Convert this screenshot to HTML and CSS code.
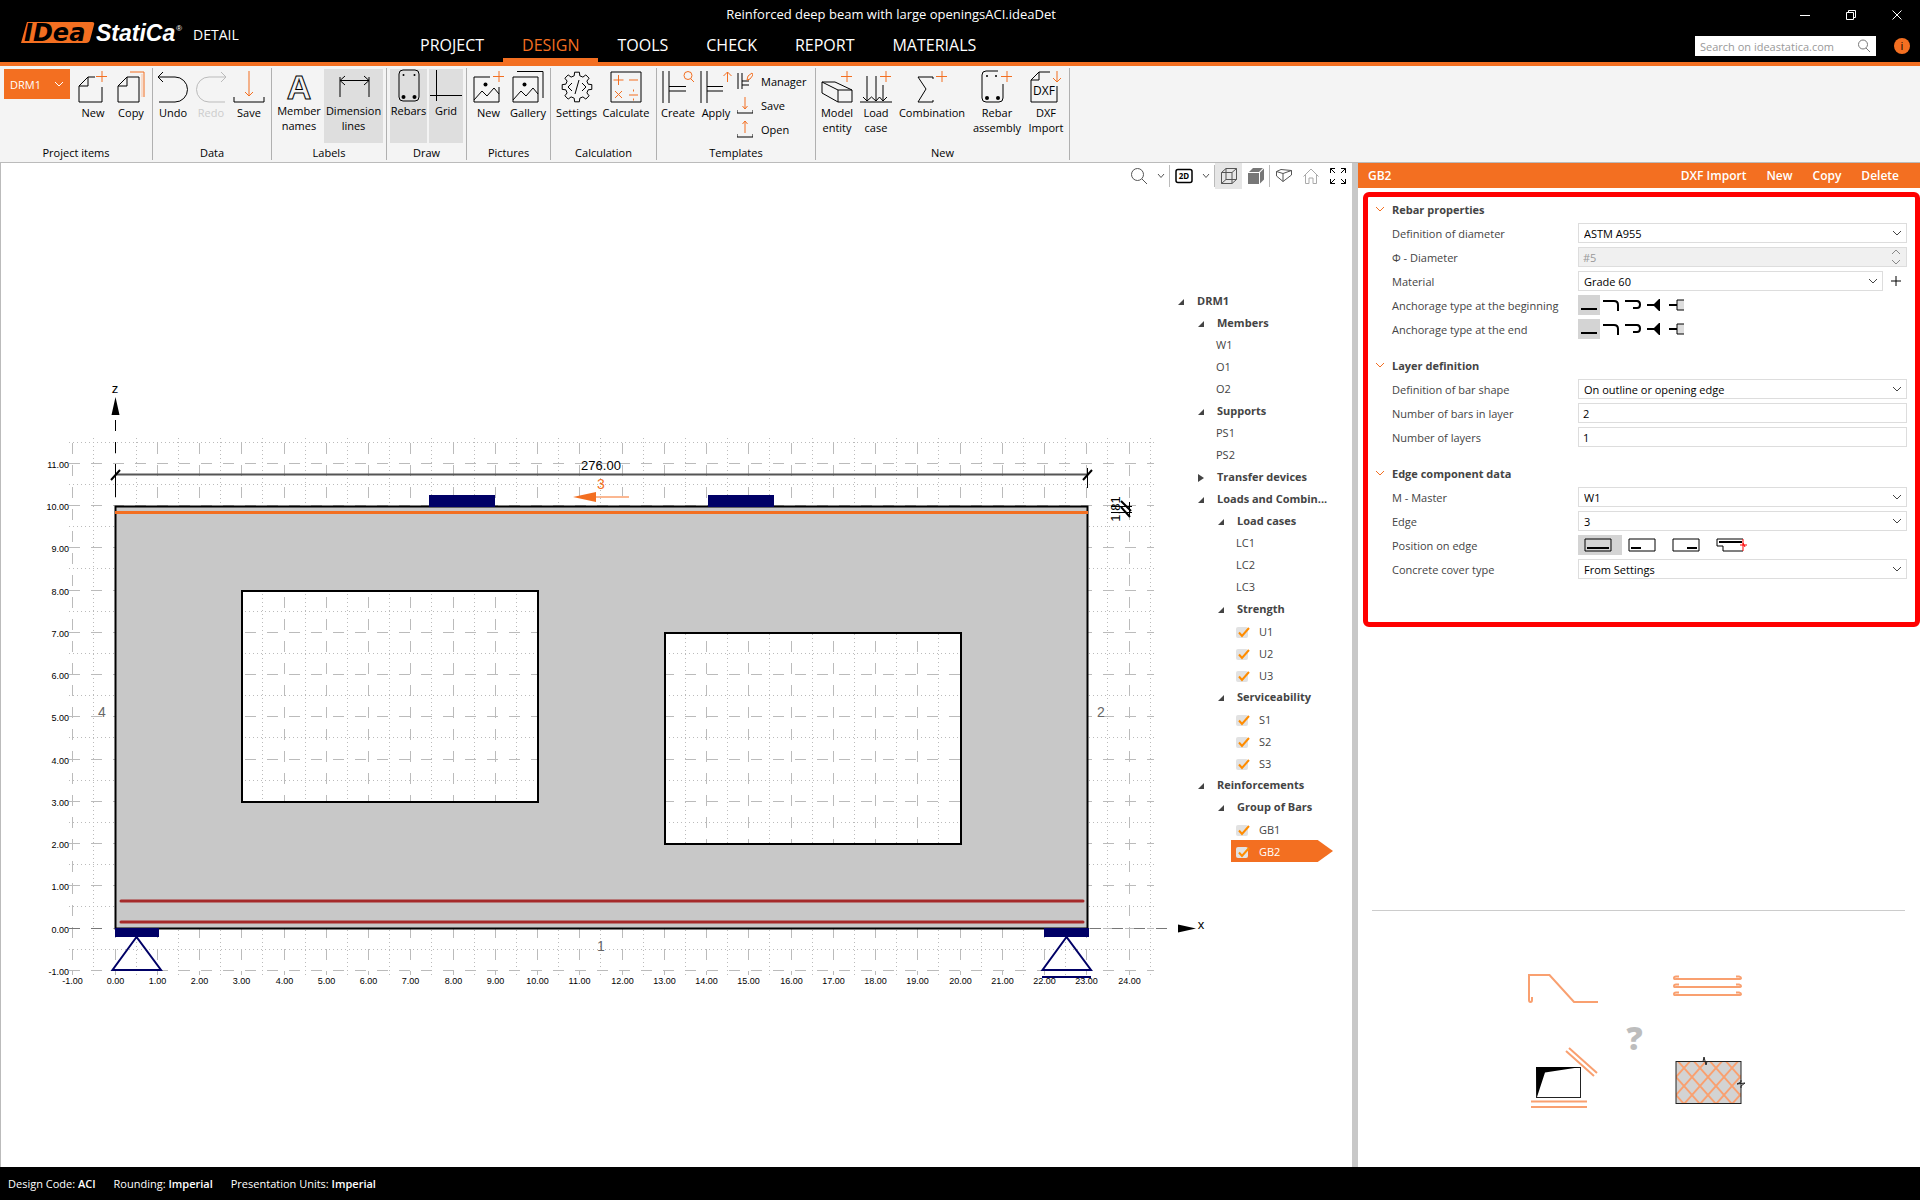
FILE: index.html
```html
<!DOCTYPE html>
<html lang="en">
<head>
    <meta charset="UTF-8">
    <meta name="viewport" content="width=device-width, initial-scale=1.0">
    <title>IDEA StatiCa Detail</title>
    <link rel="stylesheet" href="styles.css">
</head>
<body>
    <header class="titlebar">
        <div class="brand">
            <svg class="logo" width="163" height="24" viewBox="0 0 163 24">
                <path d="M7 2H72Q75 2 74 5L70 20Q69 23 66 23H1Z" fill="#f36f21"/>
                <text x="4" y="21" class="logo-idea">IDea</text>
                <text x="76" y="21" class="logo-statica">StatiCa</text>
                <text x="156" y="11" class="logo-reg">®</text>
            </svg>
            <span class="product">DETAIL</span>
        </div>
        <div class="middle">
            <div class="file-name">Reinforced deep beam with large openingsACI.ideaDet</div>
            <nav class="tabs">
                <a href="#">PROJECT</a>
                <a href="#" class="active">DESIGN</a>
                <a href="#">TOOLS</a>
                <a href="#">CHECK</a>
                <a href="#">REPORT</a>
                <a href="#">MATERIALS</a>
            </nav>
        </div>
        <div class="window-side">
            <div class="window-buttons">
                <button aria-label="Minimize"><svg width="12" height="12" viewBox="0 0 12 12"><path d="M1 6.5H11"/></svg></button>
                <button aria-label="Restore"><svg width="12" height="12" viewBox="0 0 12 12"><path d="M1.5 3.5H8.5V10.5H1.5ZM3.5 3.5V1.5H10.5V8.5H8.5"/></svg></button>
                <button aria-label="Close"><svg width="12" height="12" viewBox="0 0 12 12"><path d="M1.5 1.5L10.5 10.5M10.5 1.5L1.5 10.5"/></svg></button>
            </div>
            <div class="search-row">
                <label class="search">
                    <input type="text" placeholder="Search on ideastatica.com" aria-label="Search">
                    <svg width="14" height="14" viewBox="0 0 14 14"><circle cx="6" cy="5.5" r="4.5"/><path d="M9 9L13 13"/></svg>
                </label>
                <button class="info" aria-label="Info">i</button>
            </div>
        </div>
    </header>

    <section class="ribbon">
        <div class="group project-items">
            <div class="tools">
                <select class="item-select" aria-label="Project item"><option>DRM1</option></select>
                <button><svg class="icon" viewBox="0 0 32 34"><path d="M18 8H11L2 17V33H25V18M11 8V17H2"/><path class="o" d="M25 2V13M19 7.5H30"/></svg>New</button>
                <button><svg class="icon" viewBox="0 0 32 34"><path d="M12 8H24V33H3V17ZM12 8V17H3"/><path class="o" d="M15 3H29V28"/><path class="o2" d="M27 5V28"/></svg>Copy</button>
            </div>
            <h2>Project items</h2>
        </div>
        <div class="group data">
            <div class="tools">
                <button><svg class="icon" viewBox="0 0 32 34"><path d="M1 8H18a12.500 12.500 0 0 1 0 25H2M6 3L1 8L6 13"/></svg>Undo</button>
                <button disabled><svg class="icon" viewBox="0 0 32 34"><path d="M31 8H14a12.500 12.500 0 0 0 0 25H30M26 3L31 8L26 13"/></svg>Redo</button>
                <button><svg class="icon" viewBox="0 0 32 34"><path d="M1 28V33H31V28"/><path class="o" d="M16 2V27M12 23L16 27L20 23"/></svg>Save</button>
            </div>
            <h2>Data</h2>
        </div>
        <div class="group labels">
            <div class="tools">
                <button class="toggle"><svg class="icon" viewBox="0 0 32 34"><text x="16" y="30" class="letter">A</text></svg>Member<br>names</button>
                <button class="toggle on"><svg class="icon" viewBox="0 0 32 34"><path d="M2 8V28M31 8V28M2 11.500H31M7 7L2 11.500L7 16M26 7L31 11.500L26 16"/></svg>Dimension<br>lines</button>
            </div>
            <h2>Labels</h2>
        </div>
        <div class="group draw">
            <div class="tools">
                <button class="toggle on"><svg class="icon" viewBox="0 0 32 34"><rect x="6" y="1" width="20" height="31" rx="4"/><g class="k"><circle cx="10.500" cy="28" r="2"/><circle cx="21.500" cy="28" r="2"/><circle cx="10.500" cy="6" r="1"/><circle cx="21.500" cy="6" r="1"/></g></svg>Rebars</button>
                <button class="toggle on"><svg class="icon" viewBox="0 0 32 34"><path d="M6.500 1V32M0 26.500H32"/></svg>Grid</button>
            </div>
            <h2>Draw</h2>
        </div>
        <div class="group pictures">
            <div class="tools">
                <button><svg class="icon" viewBox="0 0 32 34"><path d="M17 8H1V33H26V18M1 31L9 22L14 27L21 19L26 25"/><circle class="k" cx="12.500" cy="15.500" r="2"/><path class="o" d="M26 2V13M20 7.500H31"/></svg>New</button>
                <button><svg class="icon" viewBox="0 0 32 34"><path d="M1 8H26V33H1ZM1 31L9 22L14 27L21 19L26 25M5 2.500H31V29"/><circle class="k" cx="12.500" cy="15.500" r="2"/></svg>Gallery</button>
            </div>
            <h2>Pictures</h2>
        </div>
        <div class="group calculation">
            <div class="tools">
                <button><svg class="icon" viewBox="0 0 32 34"><g transform="translate(16 18)"><path d="M11.200 -2.800L14.800 -2.400V2.400L11.200 2.800L9.900 5.900L12.100 8.800L8.800 12.100L5.900 9.900L2.800 11.200L2.400 14.800H-2.400L-2.800 11.200L-5.900 9.900L-8.800 12.100L-12.100 8.800L-9.900 5.900L-11.200 2.800L-14.800 2.400V-2.400L-11.200 -2.800L-9.900 -5.900L-12.100 -8.800L-8.800 -12.100L-5.900 -9.900L-2.800 -11.200L-2.400 -14.800H2.400L2.800 -11.200L5.900 -9.900L8.800 -12.100L12.100 -8.800L9.900 -5.900Z"/><path d="M-5 -4L-9 0L-5 4M5 -4L9 0L5 4M2 -7L-2 7"/></g></svg>Settings</button>
                <button><svg class="icon" viewBox="0 0 32 34"><path d="M1 3H31V33H1Z"/><path class="o" d="M8.500 6V16M3.500 11H13.500M19 11H28M5 22L12 29M12 22L5 29M19 26H28M23.500 20.500V22.500M23.500 29.500V31.500"/></svg>Calculate</button>
            </div>
            <h2>Calculation</h2>
        </div>
        <div class="group templates">
            <div class="tools">
                <button><svg class="icon" viewBox="0 0 32 34"><path d="M1 2V34M7 2V34M7 17.500H24M7 22H24"/><g class="o"><circle cx="26" cy="6.500" r="4"/><path d="M29 10L32 13"/></g></svg>Create</button>
                <button><svg class="icon" viewBox="0 0 32 34"><path d="M1 2V34M7 2V34M7 17.500H23M7 22H23"/><path class="o" d="M27.500 3V13M23.500 7L27.500 3L31.500 7"/></svg>Apply</button>
                <div class="small-tools">
                    <button><svg viewBox="0 0 16 18"><path d="M1 1V17M5 1V17M5 9H12M5 13H12"/><path class="o" d="M10 8L11 4L15 1L16 3L13 7Z"/></svg>Manager</button>
                    <button><svg viewBox="0 0 16 18"><path d="M0 14V17H16V14"/><path class="o" d="M8 1V13M5.500 10L8 13L10.500 10"/></svg>Save</button>
                    <button><svg viewBox="0 0 16 18"><path d="M0 14V17H16V14"/><path class="o" d="M8 1V13M5.500 4L8 1L10.500 4"/></svg>Open</button>
                </div>
            </div>
            <h2>Templates</h2>
        </div>
        <div class="group new-items">
            <div class="tools">
                <button><svg class="icon" viewBox="0 0 32 34"><path d="M1 13H14L31 21V33H17V21H31M17 21L1 13V24L17 33"/><path class="o" d="M26 2V13M20 7.500H31"/></svg>Model<br>entity</button>
                <button><svg class="icon" viewBox="0 0 32 34"><path d="M7 7V32M16 7V32M23 16V32M0 33H32M3 28L7 32L11.500 28L16 32L19.500 28L23 32L27 28"/><path class="o" d="M26 2V13M20 7.500H31"/></svg>Load<br>case</button>
                <button><svg class="icon" viewBox="0 0 32 34"><path d="M17 10V8H2L10 20L2 33H17V31"/><path class="o" d="M26 2V13M20 7.500H31"/></svg>Combination</button>
                <button><svg class="icon" viewBox="0 0 32 34"><path d="M17 2H5Q1 2 1 6V29Q1 33 5 33H18Q22 33 22 29V15"/><g class="k"><circle cx="6" cy="29" r="2"/><circle cx="17" cy="29" r="2"/><circle cx="6" cy="7" r="1"/><circle cx="15" cy="7" r="1"/></g><path class="o" d="M26 2V13M20 7.500H31"/></svg>Rebar<br>assembly</button>
                <button><svg class="icon" viewBox="0 0 32 34"><path d="M20 3H9L1 11V33H27V17M9 3V11H1"/><text x="14" y="26" class="dxf">DXF</text><path class="o" d="M27 2V13M23 9L27 13L31 9"/></svg>DXF<br>Import</button>
            </div>
            <h2>New</h2>
        </div>
    </section>

    <main>
        <section class="viewport">
            <svg class="drawing" viewBox="1 163 1351 1004" preserveAspectRatio="xMinYMin meet">
                <g id="grid"></g>
                <g id="scale"></g>
                <!-- beam with two openings -->
                <path class="beam" fill-rule="evenodd" d="M115.500 506.500H1087.500V928.500H115.500ZM242 591H538V802H242ZM665 633H961V844H665Z"/>
                <path class="top-bar" d="M115 512.500H1088"/>
                <path class="bar" d="M121 901H1083M121 922H1083"/>
                <!-- load plates and supports -->
                <g class="plate">
                    <rect x="429" y="495" width="66" height="12"/>
                    <rect x="708" y="495" width="66" height="12"/>
                    <rect x="115" y="928" width="44" height="9"/>
                    <rect x="1044" y="928" width="45" height="9"/>
                </g>
                <path class="support" d="M136.500 937L112.500 970H161ZM1066.500 937L1042.500 970H1091ZM1042 977H1091"/>
                <!-- dimensions -->
                <path class="dim" d="M115.500 474.500H1087.500"/>
                <path class="tick" d="M1087.500 468V488M115.500 465V488M1111 506.500H1132M1111 512.500H1132M1129.500 502V517"/>
                <path class="slash" d="M111 480L120 470M1083 480L1092 470M1121 501L1131 511M1121 507L1130 517"/>
                <text class="dim-text" x="601" y="470">276.00</text>
                <text class="dim-text" transform="translate(1120 509) rotate(-90)">1.81</text>
                <!-- axes -->
                <path class="axis" d="M115.500 420V506"/>
                <path class="axis-x" d="M69 928.500H112M1090 928.500H1176"/>
                <path d="M115.500 397L119.500 415H111.500ZM1196 928.500L1178 924.500V932.500Z"/>
                <text class="dim-text" x="115" y="393">z</text>
                <text class="dim-text" x="1201" y="929">x</text>
                <!-- edge numbers -->
                <path class="arrow-line" d="M595 497H629"/>
                <path class="arrow" d="M573 497L596 492V502Z"/>
                <text class="edge on" x="601" y="489">3</text>
                <text class="edge" x="102" y="717">4</text>
                <text class="edge" x="1101" y="717">2</text>
                <text class="edge" x="601" y="951">1</text>
            </svg>

            <div class="view-tools">
                <button aria-label="Zoom"><svg width="18" height="18" viewBox="0 0 18 18"><circle cx="7.500" cy="7.500" r="6"/><path d="M12 12L17 17"/></svg></button>
                <button class="more" aria-label="Zoom options"><svg width="8" height="6" viewBox="0 0 8 6"><path d="M1 1L4 4.500L7 1"/></svg></button>
                <i></i>
                <button aria-label="2D"><svg width="18" height="18" viewBox="0 0 18 18"><rect x="1" y="2.500" width="16" height="13" rx="2" stroke="#000" stroke-width="1.500"/><text x="9" y="12" class="two-d">2D</text></svg></button>
                <button class="more" aria-label="View options"><svg width="8" height="6" viewBox="0 0 8 6"><path d="M1 1L4 4.500L7 1"/></svg></button>
                <i></i>
                <button class="on" aria-label="Wireframe"><svg width="18" height="18" viewBox="0 0 18 18"><path d="M1.500 5.500H12V16.500H1.500ZM1.500 5.500L6 1.500H16.500V12.500L12 16.500M12 5.500L16.500 1.500M6 1.500V12.500H16.500M6 12.500L1.500 16.500"/></svg></button>
                <button aria-label="Solid"><svg width="18" height="18" viewBox="0 0 18 18"><path class="solid" d="M1 6H12V17H1ZM2 5L6 1H16L12 5ZM13 5.500L17 1.500V12.500L13 16.500Z"/></svg></button>
                <i></i>
                <button aria-label="Perspective"><svg width="18" height="18" viewBox="0 0 18 18"><path d="M1.500 4.500L6 2.500L16.500 3.500V8L8 14.500L1.500 9ZM1.500 4.500L8 6.500L16.500 3.500M8 6.500V14.500"/></svg></button>
                <button aria-label="Home"><svg width="18" height="18" viewBox="0 0 18 18"><path stroke="#aaa" d="M1.500 9.500L9 2L16.500 9.500M3.500 8V16.500H7V11H11V16.500H14.500V8"/></svg></button>
                <button aria-label="Fit"><svg width="18" height="18" viewBox="0 0 18 18"><path stroke="#000" d="M1.500 6V1.500H6M1.500 1.500L6 6M12 1.500H16.500V6M16.500 1.500L12 6M1.500 12V16.500H6M1.500 16.500L6 12M12 16.500H16.500V12M16.500 16.500L12 12"/></svg></button>
            </div>

            <ul class="tree">
                <li class="l1 open">DRM1</li>
                <li class="l2 open">Members</li>
                <li class="l2">W1</li>
                <li class="l2">O1</li>
                <li class="l2">O2</li>
                <li class="l2 open">Supports</li>
                <li class="l2">PS1</li>
                <li class="l2">PS2</li>
                <li class="l2 closed">Transfer devices</li>
                <li class="l2 open">Loads and Combin...</li>
                <li class="l3 open">Load cases</li>
                <li class="l3">LC1</li>
                <li class="l3">LC2</li>
                <li class="l3">LC3</li>
                <li class="l3 open">Strength</li>
                <li class="l3"><label><input type="checkbox" checked>U1</label></li>
                <li class="l3"><label><input type="checkbox" checked>U2</label></li>
                <li class="l3"><label><input type="checkbox" checked>U3</label></li>
                <li class="l3 open">Serviceability</li>
                <li class="l3"><label><input type="checkbox" checked>S1</label></li>
                <li class="l3"><label><input type="checkbox" checked>S2</label></li>
                <li class="l3"><label><input type="checkbox" checked>S3</label></li>
                <li class="l2 open">Reinforcements</li>
                <li class="l3 open">Group of Bars</li>
                <li class="l3"><label><input type="checkbox" checked>GB1</label></li>
                <li class="l3 selected"><label><input type="checkbox" checked>GB2</label></li>
            </ul>
        </section>

        <aside class="panel">
            <div class="panel-head">
                <h2>GB2</h2>
                <button>DXF Import</button>
                <button>New</button>
                <button>Copy</button>
                <button>Delete</button>
            </div>
            <form class="properties">
                <fieldset>
                    <legend>Rebar properties</legend>
                    <div class="row"><label for="diameterDef">Definition of diameter</label><select id="diameterDef"><option>ASTM A955</option></select></div>
                    <div class="row"><label for="diameter">Φ - Diameter</label><input type="text" id="diameter" class="spin" value="#5" disabled></div>
                    <div class="row"><label for="material">Material</label><div class="with-add"><select id="material"><option>Grade 60</option></select><button type="button" aria-label="Add material"><svg width="12" height="12" viewBox="0 0 12 12"><path d="M6 1V11M1 6H11"/></svg></button></div></div>
                    <div class="row"><span>Anchorage type at the beginning</span>
                        <div class="choices">
                            <label><input type="radio" name="begin" aria-label="Straight" checked><svg viewBox="0 0 20 20"><path d="M2 14H18"/></svg></label>
                            <label><input type="radio" name="begin" aria-label="Bend"><svg viewBox="0 0 20 20"><path d="M2 6H13Q17 6 17 10V16"/></svg></label>
                            <label><input type="radio" name="begin" aria-label="Hook"><svg viewBox="0 0 20 20"><path d="M2 6H14Q17 6 17 9.500T14 13H10"/></svg></label>
                            <label><input type="radio" name="begin" aria-label="Head"><svg viewBox="0 0 20 20"><path d="M2 10H12"/><path class="fill" d="M9 9L14 4H15V16H14L9 11Z"/></svg></label>
                            <label><input type="radio" name="begin" aria-label="Plate"><svg viewBox="0 0 20 20"><path d="M2 10H10"/><path class="thin" d="M17 5H10V15H17"/></svg></label>
                        </div>
                    </div>
                    <div class="row"><span>Anchorage type at the end</span>
                        <div class="choices">
                            <label><input type="radio" name="end" aria-label="Straight" checked><svg viewBox="0 0 20 20"><path d="M2 14H18"/></svg></label>
                            <label><input type="radio" name="end" aria-label="Bend"><svg viewBox="0 0 20 20"><path d="M2 6H13Q17 6 17 10V16"/></svg></label>
                            <label><input type="radio" name="end" aria-label="Hook"><svg viewBox="0 0 20 20"><path d="M2 6H14Q17 6 17 9.500T14 13H10"/></svg></label>
                            <label><input type="radio" name="end" aria-label="Head"><svg viewBox="0 0 20 20"><path d="M2 10H12"/><path class="fill" d="M9 9L14 4H15V16H14L9 11Z"/></svg></label>
                            <label><input type="radio" name="end" aria-label="Plate"><svg viewBox="0 0 20 20"><path d="M2 10H10"/><path class="thin" d="M17 5H10V15H17"/></svg></label>
                        </div>
                    </div>
                </fieldset>
                <fieldset>
                    <legend>Layer definition</legend>
                    <div class="row"><label for="shape">Definition of bar shape</label><select id="shape"><option>On outline or opening edge</option></select></div>
                    <div class="row"><label for="bars">Number of bars in layer</label><input type="text" id="bars" value="2"></div>
                    <div class="row"><label for="layers">Number of layers</label><input type="text" id="layers" value="1"></div>
                </fieldset>
                <fieldset>
                    <legend>Edge component data</legend>
                    <div class="row"><label for="master">M - Master</label><select id="master"><option>W1</option></select></div>
                    <div class="row"><label for="edge">Edge</label><select id="edge"><option>3</option></select></div>
                    <div class="row"><span>Position on edge</span>
                        <div class="choices wide">
                            <label><input type="radio" name="pos" aria-label="Whole edge" checked><svg viewBox="0 0 44 20"><path class="box" d="M7 4H33V16H7Z"/><path d="M9 13H31"/></svg></label>
                            <label><input type="radio" name="pos" aria-label="Start"><svg viewBox="0 0 44 20"><path class="box" d="M7 4H33V16H7Z"/><path d="M9 13H19"/></svg></label>
                            <label><input type="radio" name="pos" aria-label="End"><svg viewBox="0 0 44 20"><path class="box" d="M7 4H33V16H7Z"/><path d="M21 13H31"/></svg></label>
                            <label><input type="radio" name="pos" aria-label="Over edges"><svg viewBox="0 0 44 20"><path class="box" d="M33 4H7V11H13V16H33"/><path d="M9 7H32"/><path class="red" d="M33 4V16M30 10H37M33 8L35 12"/></svg></label>
                        </div>
                    </div>
                    <div class="row"><label for="cover">Concrete cover type</label><select id="cover"><option>From Settings</option></select></div>
                </fieldset>
            </form>
            <div class="help">
                <svg width="230" height="160" viewBox="1524 960 230 160">
                    <defs>
                        <pattern id="mesh" width="16" height="18" x="1676" y="1059" patternUnits="userSpaceOnUse">
                            <path d="M-1 -1L17 19M17 -1L-1 19" stroke="#f9a070" stroke-width="2"/>
                        </pattern>
                    </defs>
                    <g class="rebar">
                        <path d="M1532 997V1000Q1532 1002 1530.500 1002T1529 1000V975H1549.500L1574 1002H1598"/>
                        <path d="M1679 976.500H1676Q1674 976.500 1674 978T1676 979H1739Q1741 979 1741 978T1739 976.500H1736"/>
                        <path d="M1679 984.500H1676Q1674 984.500 1674 986T1676 987H1739Q1741 987 1741 986T1739 984.500H1736"/>
                        <path d="M1679 992.500H1676Q1674 992.500 1674 994T1676 995H1739Q1741 995 1741 994T1739 992.500H1736"/>
                        <path d="M1531 1101.500H1587M1531 1107H1587M1569 1048L1597 1073M1566 1051L1594 1076"/>
                    </g>
                    <rect x="1536.500" y="1067.500" width="44" height="30" fill="#fff" stroke="#222"/>
                    <path d="M1536 1067H1581L1545 1072.500L1537 1097Z"/>
                    <rect x="1676" y="1061.500" width="65" height="42" fill="#d3d3d3"/>
                    <rect x="1676" y="1061.500" width="65" height="42" fill="url(#mesh)" stroke="#222"/>
                    <path d="M1701 1061.500H1703L1704 1057L1706 1065L1707 1061.500H1709M1741 1080V1082L1737 1084L1745 1083L1741 1086V1088" fill="none" stroke="#222"/>
                    <text x="1634.500" y="1050" class="question">?</text>
                </svg>
            </div>
        </aside>
    </main>

    <footer class="statusbar">
        <span>Design Code: <b>ACI</b></span>
        <span>Rounding: <b>Imperial</b></span>
        <span>Presentation Units: <b>Imperial</b></span>
    </footer>

    <script>
        // one grid unit is 42.25 px, origin at the lower left corner of the beam
        const unit = 42.25, x0 = 115.5, y0 = 928.5;
        let lines = '', labels = '';

        for (let i = -2; i <= 49; i++) {
            const x = Math.round(x0 + i * unit / 2) - 0.5;
            const cls = i % 2 ? 'half' : 'full';
            lines += `<path class="${cls}" d="M${x} ${i % 2 ? 438 : 443}V${i % 2 ? 976 : 975}"/>`;
            if (i % 2 === 0) {
                labels += `<text x="${x}" y="984" text-anchor="middle">${(i / 2).toFixed(2)}</text>`;
            }
        }
        for (let i = -2; i <= 23; i++) {
            const y = Math.round(y0 - i * unit / 2) - 0.5;
            const cls = i % 2 ? 'half' : 'full';
            lines += `<path class="${cls}" d="M69 ${y}H1154"/>`;
            if (i % 2 === 0) {
                labels += `<text x="69" y="${y + 4}" text-anchor="end">${(i / 2).toFixed(2)}</text>`;
            }
        }
        document.getElementById('grid').innerHTML = lines;
        document.getElementById('scale').innerHTML = labels;
    </script>
</body>
</html>
```
FILE: styles.css
```css
* {
    box-sizing: border-box;
}
body {
    margin: 0;
    height: 100vh;
    display: flex;
    flex-direction: column;
    font-family: "Open Sans", "Noto Sans", sans-serif;
    font-size: 11px;
    color: #000;
    background: #fff;
}
button, input, select {
    font: inherit;
    color: inherit;
}
button {
    border: none;
    background: none;
    padding: 0;
    cursor: pointer;
}
h2 {
    margin: 0;
    font-size: 11px;
    font-weight: 400;
}
svg {
    display: block;
    fill: none;
}

/* title bar */
.titlebar {
    display: flex;
    height: 66px;
    background: #000;
    color: #fff;
    border-bottom: 4px solid #f36f21;
}
.brand {
    flex: 0 0 401px;
    display: flex;
    align-items: center;
    gap: 10px;
    padding: 2px 0 0 20px;
}
.logo text {
    font-family: "Liberation Sans", sans-serif;
    font-weight: 700;
    font-style: italic;
}
.logo .logo-idea {
    font-size: 24px;
    font-family: "DejaVu Sans", sans-serif;
    fill: #000;
}
.logo .logo-statica {
    font-size: 23px;
    fill: #fff;
}
.logo .logo-reg {
    font-size: 8px;
    font-weight: 400;
    fill: #fff;
}
.product {
    font-size: 14px;
    padding-top: 4px;
}
.middle {
    flex: 1;
    display: flex;
    flex-direction: column;
    justify-content: space-between;
}
.file-name {
    font-size: 13px;
    line-height: 28px;
    width: 980px;
    text-align: center;
}
.tabs {
    display: flex;
}
.tabs a {
    color: #fff;
    text-decoration: none;
    font-size: 16px;
    line-height: 26px;
    padding: 0 19px;
    border-bottom: 4px solid transparent;
}
.tabs a.active {
    color: #f36f21;
    border-color: #f36f21;
}
.window-side {
    display: flex;
    flex-direction: column;
    align-items: flex-end;
    gap: 12px;
    padding: 9px 10px 0 0;
}
.window-buttons {
    display: flex;
    gap: 34px;
    padding-right: 7px;
}
.window-buttons svg {
    stroke: #fff;
}
.search-row {
    display: flex;
    align-items: center;
    gap: 18px;
    padding-top: 3px;
}
.search {
    display: flex;
    align-items: center;
    width: 181px;
    height: 20px;
    background: #fff;
    padding: 0 5px;
}
.search input {
    flex: 1;
    min-width: 0;
    border: none;
    padding: 0;
    outline: none;
}
.search input::placeholder {
    color: #999;
}
.search svg {
    stroke: #777;
}
.info {
    width: 16px;
    height: 16px;
    border-radius: 50%;
    background: #f36f21;
    color: #000;
    line-height: 16px;
}

/* ribbon */
.ribbon {
    display: flex;
    height: 97px;
    background: #f4f4f4;
    border-bottom: 1px solid #bbb;
    padding: 2px 0;
}
.group {
    display: flex;
    flex-direction: column;
    justify-content: space-between;
    border-right: 1px solid #b0b0b0;
    padding-top: 1px;
}
.group h2 {
    text-align: center;
    line-height: 15px;
}
.tools {
    display: grid;
    align-items: start;
    line-height: 15px;
}
.project-items .tools { grid-template-columns: 66px 46px 30px; padding: 0 6px 0 4px; }
.data .tools { grid-template-columns: 38px 38px 38px; padding: 0 3px 0 1px; }
.labels .tools { grid-template-columns: 48px 59px; gap: 1px; padding: 0 3px; }
.draw .tools { grid-template-columns: 37px 34px; gap: 2px; padding: 0 3px; }
.pictures .tools { grid-template-columns: 39px 40px; padding: 0 2px; }
.calculation .tools { grid-template-columns: 45px 54px; padding: 0 3px; }
.templates .tools { grid-template-columns: 38px 38px 78px; padding: 0 2px; }
.new-items .tools { grid-template-columns: 40px 38px 74px 56px 42px; padding: 0 2px 0 1px; }
.tools button {
    display: flex;
    flex-direction: column;
    align-items: center;
    gap: 2px;
    white-space: nowrap;
}
.tools svg {
    stroke: #000;
    flex: none;
}
.tools button:disabled {
    color: #ccc;
}
.tools button:disabled svg {
    stroke: #bbb;
}
.icon {
    width: 32px;
    height: 34px;
}
.tools .toggle {
    gap: 0;
    height: 74px;
}
.tools .on {
    background: #dedede;
}
.icon .letter {
    font: 700 34px "Liberation Sans", sans-serif;
    text-anchor: middle;
}
.icon .dxf {
    font: 12px "Open Sans", sans-serif;
    text-anchor: middle;
    fill: #000;
    stroke: none;
}
.tools .o {
    stroke: #f36f21;
}
.tools .o2 {
    stroke: #fbc4a4;
}
.k {
    fill: #000;
    stroke: none;
}
.item-select {
    appearance: none;
    height: 30px;
    border: none;
    border-radius: 0;
    padding: 0 6px;
    color: #fff;
    background: #f36f21 url("data:image/svg+xml,%3Csvg xmlns='http://www.w3.org/2000/svg' width='8' height='6'%3E%3Cpath d='M0 1L4 5L8 1' fill='none' stroke='white'/%3E%3C/svg%3E") no-repeat right 7px center;
}
.small-tools {
    display: flex;
    flex-direction: column;
    gap: 6px;
    padding: 3px 0 0 2px;
}
.tools .small-tools button {
    flex-direction: row;
    gap: 8px;
    height: 18px;
}
.small-tools svg {
    width: 16px;
    height: 18px;
}

/* drawing area */
main {
    flex: 1;
    display: flex;
    min-height: 0;
}
.viewport {
    flex: 1;
    min-width: 0;
    display: grid;
    grid-template: auto 1fr / 100%;
    border-left: 1px solid #bbb;
}
.drawing {
    grid-area: 1 / 1 / 3 / 2;
    width: 100%;
    height: 100%;
    min-height: 0;
    fill: #000;
    font-family: "Liberation Sans", sans-serif;
}
#scale {
    font-size: 9px;
}
#grid .half {
    stroke: #bbb;
    stroke-dasharray: 1 3;
}
#grid .full {
    stroke: #bbb;
    stroke-dasharray: 11 11;
}
.beam {
    fill: #c8c8c8;
    stroke: #000;
    stroke-width: 2px;
}
.top-bar {
    stroke: #f36f21;
    stroke-width: 3px;
}
.bar {
    stroke: #a52a2a;
    stroke-width: 3px;
    stroke-linecap: round;
}
.plate {
    fill: #000066;
}
.support {
    fill: none;
    stroke: #000066;
    stroke-width: 2px;
}
.dim {
    stroke: #555;
    stroke-width: 2px;
}
.tick {
    stroke: #000;
}
.slash {
    stroke: #000;
    stroke-width: 2px;
}
.dim-text {
    font-size: 13px;
    text-anchor: middle;
}
.axis {
    stroke: #000;
    stroke-dasharray: 11 11;
}
.axis-x {
    stroke: #777;
    stroke-dasharray: 11 11;
}
.arrow {
    fill: #f36f21;
}
.arrow-line {
    stroke: #fbb791;
    stroke-width: 2px;
}
.edge {
    font-size: 14px;
    fill: #666;
    text-anchor: middle;
}
.edge.on {
    fill: #f36f21;
}
.view-tools {
    grid-area: 1 / 1;
    justify-self: end;
    display: flex;
    align-items: center;
    height: 26px;
    padding-right: 1px;
}
.view-tools button {
    display: flex;
    align-items: center;
    justify-content: center;
    width: 27px;
    height: 26px;
}
.view-tools .more {
    width: 17px;
}
.view-tools .on {
    background: #e6e6e6;
}
.view-tools i {
    width: 1px;
    height: 22px;
    background: #bbb;
}
.view-tools svg {
    stroke: #555;
}
.view-tools .solid {
    fill: #777;
    stroke: none;
}
.two-d {
    font: 700 8px "Open Sans", sans-serif;
    text-anchor: middle;
    fill: #000;
    stroke: none;
}

/* project tree */
.tree {
    grid-area: 2 / 1;
    justify-self: end;
    width: 176px;
    margin: 101px 0 0;
    padding: 0;
    list-style: none;
    color: #444;
    line-height: 22px;
}
.tree li {
    display: flex;
    align-items: center;
    height: 22px;
}
.tree .l2 { padding-left: 40px; }
.tree .l3 { padding-left: 60px; }
.tree .open, .tree .closed {
    font-weight: 700;
}
.tree .open::before, .tree .closed::before {
    content: "";
    width: 6px;
    height: 6px;
    margin: 2px 13px 0 2px;
    background: #444;
    clip-path: polygon(100% 0, 100% 100%, 0 100%);
}
.tree .closed::before {
    height: 8px;
    clip-path: polygon(0 0, 100% 50%, 0 100%);
}
.tree .l2.open, .tree .l2.closed { padding-left: 20px; }
.tree .l3.open { padding-left: 40px; }
.tree label {
    display: flex;
    align-items: center;
    gap: 8px;
    padding-top: 2px;
}
.tree input {
    appearance: none;
    width: 15px;
    height: 13px;
    margin: 0;
    background: url("data:image/svg+xml,%3Csvg xmlns='http://www.w3.org/2000/svg' width='15' height='13'%3E%3Crect y='1' width='12' height='11' rx='2' fill='%23e2e2e2'/%3E%3Cpath d='M3 6.500L6 10L13 2' fill='none' stroke='%23ff8c00' stroke-width='2'/%3E%3C/svg%3E") no-repeat;
}
.tree .selected {
    margin: 0 19px 0 55px;
    padding-left: 5px;
    color: #fff;
    background: #f36f21;
    clip-path: polygon(0 0, 85% 0, 100% 50%, 85% 100%, 0 100%);
}

/* properties */
.panel {
    flex: 0 0 568px;
    min-width: 0;
    display: flex;
    flex-direction: column;
    border-left: 6px solid #c8c8c8;
}
.panel-head {
    display: flex;
    align-items: center;
    gap: 20px;
    height: 25px;
    padding: 0 21px 0 10px;
    background: #f36f21;
    color: #fff;
    font-size: 12px;
    font-weight: 600;
}
.panel-head h2 {
    flex: 1;
    font-size: 12px;
    font-weight: 600;
}
.properties {
    margin: 4px 0 0 5px;
    padding: 0 8px 41px;
    border: 5px solid #f00;
    border-radius: 6px;
    color: #444;
}
fieldset {
    border: none;
    margin: 0 0 12px;
    padding: 0;
    min-width: 0;
}
fieldset:last-child {
    margin-bottom: 0;
}
legend {
    display: flex;
    align-items: center;
    gap: 8px;
    height: 24px;
    padding: 0;
    font-weight: 700;
}
legend::before {
    content: "";
    width: 8px;
    height: 5px;
    background: url("data:image/svg+xml,%3Csvg xmlns='http://www.w3.org/2000/svg' width='8' height='5'%3E%3Cpath d='M0 0L4 4L8 0' fill='none' stroke='%23f36f21'/%3E%3C/svg%3E") no-repeat;
}
.row {
    display: grid;
    grid-template-columns: 186px 1fr;
    align-items: center;
    height: 24px;
    padding-left: 16px;
}
.row select, .row input[type="text"] {
    appearance: none;
    width: 100%;
    height: 20px;
    padding: 0 4px;
    border: 1px solid #ddd;
    border-radius: 0;
    background-color: #fff;
    color: #000;
}
.row select {
    padding: 0 5px;
    background-image: url("data:image/svg+xml,%3Csvg xmlns='http://www.w3.org/2000/svg' width='10' height='6'%3E%3Cpath d='M1 1L5 5L9 1' fill='none' stroke='%23444'/%3E%3C/svg%3E");
    background-repeat: no-repeat;
    background-position: right 4px center;
}
.row input.spin {
    background: #f0f0f0 url("data:image/svg+xml,%3Csvg xmlns='http://www.w3.org/2000/svg' width='10' height='16'%3E%3Cpath d='M1 5L5 1L9 5M1 11L5 15L9 11' fill='none' stroke='%23888'/%3E%3C/svg%3E") no-repeat right 5px center;
    color: #999;
}
.with-add {
    display: flex;
    align-items: center;
}
.with-add button {
    flex: 0 0 24px;
    padding-left: 7px;
}
.with-add svg {
    stroke: #000;
}
.choices {
    display: flex;
}
.choices label {
    display: flex;
}
.choices input {
    appearance: none;
    width: 0;
    height: 0;
    margin: 0;
}
.choices svg {
    width: 22px;
    height: 20px;
    stroke: #000;
    stroke-width: 2px;
}
.choices.wide svg {
    width: 44px;
}
.choices input:checked + svg {
    background: #d4d4d4;
}
.choices .box, .choices .thin {
    stroke-width: 1px;
}
.choices .thin {
    fill: #ddd;
}
.choices .fill {
    fill: #000;
    stroke: none;
}
.choices .red {
    stroke: #f00;
    stroke-width: 1px;
}
.help {
    display: flex;
    justify-content: center;
    margin: auto 15px 0 14px;
    padding: 49px 0 47px;
    border-top: 1px solid #ccc;
}
.help svg {
    fill: #000;
}
.rebar {
    fill: none;
    stroke: #f9a070;
    stroke-width: 2px;
}
.question {
    font: 800 32px "Open Sans", sans-serif;
    text-anchor: middle;
    fill: #bdbdbd;
}

/* status bar */
.statusbar {
    display: flex;
    align-items: center;
    gap: 18px;
    height: 33px;
    padding: 0 8px;
    background: #000;
    color: #fff;
}
.statusbar b {
    font-weight: 600;
}
```
